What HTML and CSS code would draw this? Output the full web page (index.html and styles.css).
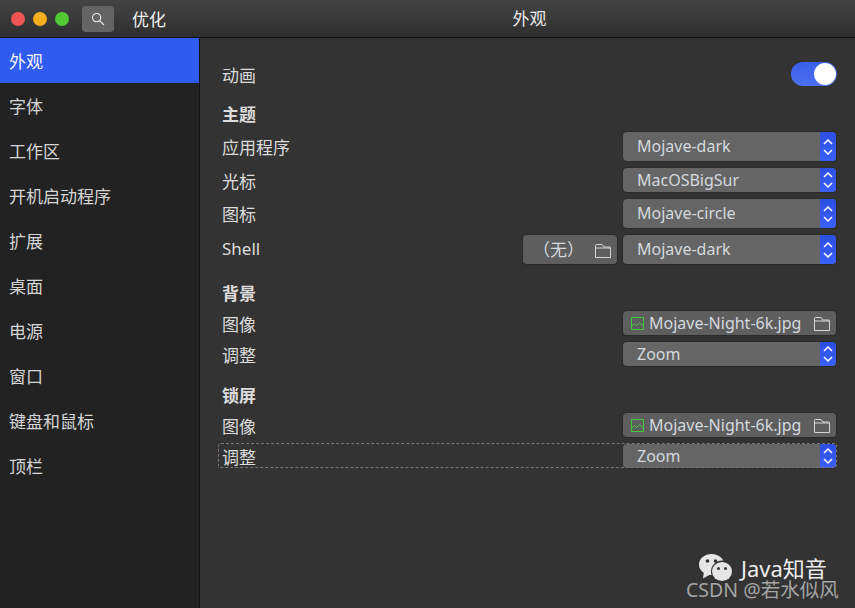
FILE: index.html
```html
<!DOCTYPE html>
<html lang="zh">
<head>
<meta charset="utf-8">
<title>优化</title>
<link rel="stylesheet" href="styles.css">
</head>
<body>
<div class="window">
  <header class="titlebar">
    <div class="tb-left">
      <div class="lights">
        <span class="light red"></span>
        <span class="light yellow"></span>
        <span class="light green"></span>
      </div>
      <button class="search">
        <svg width="14" height="14" viewBox="0 0 14 14"><circle cx="5.6" cy="5.6" r="4.1" fill="none" stroke="#f2f2f2" stroke-width="1.1"/><path d="M8.6 8.6 L13 13" stroke="#e8e8e8" stroke-width="1.2" fill="none"/></svg>
      </button>
      <span class="app-name">优化</span>
    </div>
    <div class="tb-title">外观</div>
  </header>
  <div class="body">
    <nav class="sidebar">
      <div class="nav-item active">外观</div>
      <div class="nav-item">字体</div>
      <div class="nav-item">工作区</div>
      <div class="nav-item">开机启动程序</div>
      <div class="nav-item">扩展</div>
      <div class="nav-item">桌面</div>
      <div class="nav-item">电源</div>
      <div class="nav-item">窗口</div>
      <div class="nav-item">键盘和鼠标</div>
      <div class="nav-item">顶栏</div>
    </nav>
    <main class="content">
      <div class="row anim-row">
        <span class="label">动画</span>
        <span class="toggle"><span class="knob"></span></span>
      </div>

      <section class="group">
        <h2 class="heading">主题</h2>
        <div class="row tall"><span class="label">应用程序</span><div class="select"><span class="value">Mojave-dark</span><span class="arrows"><svg width="10" height="18" viewBox="0 0 10 18"><path d="M1 6 L5 2 L9 6 M1 12 L5 16 L9 12" fill="none" stroke="#fff" stroke-width="1.5"/></svg></span></div></div>
        <div class="row"><span class="label">光标</span><div class="select"><span class="value">MacOSBigSur</span><span class="arrows"><svg width="10" height="18" viewBox="0 0 10 18"><path d="M1 6 L5 2 L9 6 M1 12 L5 16 L9 12" fill="none" stroke="#fff" stroke-width="1.5"/></svg></span></div></div>
        <div class="row tall"><span class="label">图标</span><div class="select"><span class="value">Mojave-circle</span><span class="arrows"><svg width="10" height="18" viewBox="0 0 10 18"><path d="M1 6 L5 2 L9 6 M1 12 L5 16 L9 12" fill="none" stroke="#fff" stroke-width="1.5"/></svg></span></div></div>
        <div class="row tall">
          <span class="label label-latin">Shell</span>
          <div class="controls">
            <div class="none-btn"><span class="none-text">（无）</span><svg class="folder" width="16" height="14" viewBox="0 0 16 14"><path d="M.5 13.500V1.500A1 1 0 0 1 1.500.5H7L9 3H14.500A1 1 0 0 1 15.500 4V13.500ZM.5 4H15.500" fill="none" stroke="#d6d6d6"/></svg></div>
            <div class="select"><span class="value">Mojave-dark</span><span class="arrows"><svg width="10" height="18" viewBox="0 0 10 18"><path d="M1 6 L5 2 L9 6 M1 12 L5 16 L9 12" fill="none" stroke="#fff" stroke-width="1.5"/></svg></span></div>
          </div>
        </div>
      </section>

      <section class="group">
        <h2 class="heading">背景</h2>
        <div class="row"><span class="label">图像</span><div class="file"><svg class="pic" width="13" height="13" viewBox="0 0 13 13"><path d="M.5.5H12.500V12.500H.5ZM.5 9.500L3.500 6.500L5.500 8.500L8.500 6L12.500 9" fill="none" stroke="#3ecb3e"/></svg><span class="file-name">Mojave-Night-6k.jpg</span><svg class="folder" width="16" height="14" viewBox="0 0 16 14"><path d="M.5 13.500V1.500A1 1 0 0 1 1.500.5H7L9 3H14.500A1 1 0 0 1 15.500 4V13.500ZM.5 4H15.500" fill="none" stroke="#d6d6d6"/></svg></div></div>
        <div class="row"><span class="label">调整</span><div class="select"><span class="value">Zoom</span><span class="arrows"><svg width="10" height="18" viewBox="0 0 10 18"><path d="M1 6 L5 2 L9 6 M1 12 L5 16 L9 12" fill="none" stroke="#fff" stroke-width="1.5"/></svg></span></div></div>
      </section>

      <section class="group">
        <h2 class="heading">锁屏</h2>
        <div class="row"><span class="label">图像</span><div class="file"><svg class="pic" width="13" height="13" viewBox="0 0 13 13"><path d="M.5.5H12.500V12.500H.5ZM.5 9.500L3.500 6.500L5.500 8.500L8.500 6L12.500 9" fill="none" stroke="#3ecb3e"/></svg><span class="file-name">Mojave-Night-6k.jpg</span><svg class="folder" width="16" height="14" viewBox="0 0 16 14"><path d="M.5 13.500V1.500A1 1 0 0 1 1.500.5H7L9 3H14.500A1 1 0 0 1 15.500 4V13.500ZM.5 4H15.500" fill="none" stroke="#d6d6d6"/></svg></div></div>
        <div class="row focused"><span class="label">调整</span><div class="select"><span class="value">Zoom</span><span class="arrows"><svg width="10" height="18" viewBox="0 0 10 18"><path d="M1 6 L5 2 L9 6 M1 12 L5 16 L9 12" fill="none" stroke="#fff" stroke-width="1.5"/></svg></span></div></div>
      </section>
    </main>
  </div>
  <div class="watermark">
    <div class="wm-top">
      <svg width="34" height="28" viewBox="0 0 34 28"><ellipse cx="12.500" cy="10.500" rx="12.500" ry="10.500" fill="#e6e6e6"/><path d="M5 17L4 24.500L12 20Z" fill="#e6e6e6"/><circle cx="8.500" cy="7" r="1.800" fill="#333"/><circle cx="16.500" cy="7" r="1.800" fill="#333"/><circle cx="23" cy="17.500" r="11" fill="#333"/><ellipse cx="23" cy="17.500" rx="10" ry="9.500" fill="#e6e6e6"/><circle cx="19.500" cy="14.500" r="1.500" fill="#333"/><circle cx="26.500" cy="14.500" r="1.500" fill="#333"/></svg>
      <span class="wm-name">Java知音</span>
    </div>
    <div class="wm-csdn">CSDN @若水似风</div>
  </div>
</div>
</body>
</html>
```

FILE: styles.css
```css
* { box-sizing: border-box; }
html, body { margin: 0; padding: 0; }
body {
  width: 855px;
  height: 608px;
  overflow: hidden;
  font-family: "Noto Sans", "Noto Sans CJK SC", sans-serif;
  font-size: 17px;
  color: #dcdcdc;
  background: #333;
}
.window { position: relative; width: 855px; height: 608px; display: flex; flex-direction: column; }

.titlebar {
  height: 38px;
  flex: none;
  display: flex;
  background: linear-gradient(#444444, #2e2e2e);
  border-bottom: 1px solid #111;
}
.tb-left { width: 199px; flex: none; display: flex; align-items: center; padding-left: 11px; }
.lights { display: flex; gap: 8px; }
.light { width: 14px; height: 14px; border-radius: 50%; }
.red { background: #ee5451; }
.yellow { background: #f5b01f; }
.green { background: #53c935; }
.search {
  width: 32px;
  height: 26px;
  margin-left: 13px;
  padding: 0;
  border: 0;
  border-radius: 4px;
  background: #646464;
  display: flex;
  align-items: center;
  justify-content: center;
}
.app-name { margin-left: 18px; color: #f0f0f0; }
.tb-title { flex: 1; text-align: center; line-height: 37px; color: #e8e8e8; padding-left: 5px; }

.body { flex: 1; display: flex; min-height: 0; }
.sidebar {
  width: 200px;
  flex: none;
  background: #222222;
  border-right: 1px solid #111;
}
.nav-item {
  height: 45px;
  line-height: 47px;
  padding-left: 9px;
  color: #d6d6d6;
}
.nav-item.active { background: #2f5bf1; color: #f4f4f4; }

.content { flex: 1; padding: 24px 19px 0 22px; }
.row { display: flex; align-items: center; justify-content: space-between; height: 24px; }
.row.tall { height: 29px; }
.label { color: #dcdcdc; }
.label-latin { padding-bottom: 2px; }
.toggle {
  width: 46px;
  height: 24px;
  margin-right: -1px;
  border-radius: 12px;
  background: linear-gradient(#3a5fe8, #4d6ff0);
  display: flex;
  justify-content: flex-end;
  padding: 1px;
}
.knob { width: 22px; height: 22px; border-radius: 50%; background: #fff; }

.group { display: flex; flex-direction: column; gap: 7px; margin-top: 18px; }
.group:first-of-type { margin-top: 17px; }
.heading { margin: 0; height: 22px; line-height: 24px; font-size: 17px; font-weight: 700; color: #dcdcdc; }

.controls { display: flex; gap: 6px; height: 100%; }
.select, .file, .none-btn { font-size: 16px; box-shadow: 0 0 1px 1px rgba(0, 0, 0, .18); }
.select {
  width: 213px;
  height: 100%;
  display: flex;
  justify-content: space-between;
  border-radius: 4px;
  background: #656565;
  overflow: hidden;
}
.value { padding-left: 14px; align-self: center; color: #d4d9de; }
.tall .value { padding-bottom: 2px; }
.arrows {
  width: 16px;
  background: linear-gradient(#2b50e0, #3a60f8);
  display: flex;
  align-items: center;
  justify-content: center;
}
.none-btn {
  width: 94px;
  display: flex;
  align-items: center;
  justify-content: space-between;
  padding: 0 6px 0 10px;
  border-radius: 4px;
  background: #5e5e5e;
}
.none-text { color: #d4d9de; font-size: 17px; padding-bottom: 2px; }
.folder { flex: none; position: relative; top: 1px; }
.file {
  width: 213px;
  height: 100%;
  display: flex;
  align-items: center;
  padding: 0 6px 0 8px;
  border-radius: 4px;
  background: #5e5e5e;
}
.pic { flex: none; }
.file-name { flex: 1; margin-left: 5px; color: #d4d9de; white-space: nowrap; }
.row.focused { position: relative; }
.row.focused::after {
  content: "";
  position: absolute;
  left: -4px;
  right: -1px;
  top: -1px;
  bottom: 0;
  border: 1px dashed #777;
  border-radius: 3px;
  pointer-events: none;
}

.watermark { position: absolute; left: 686px; top: 554px; width: 165px; }
.wm-top { display: flex; align-items: center; padding-left: 13px; gap: 8px; height: 28px; }
.wm-name { font-size: 22px; line-height: 21px; color: #eee; }
.wm-csdn { font-size: 19.500px; line-height: 19px; color: #a5a5a5; margin-top: -2px; white-space: nowrap; }
```
